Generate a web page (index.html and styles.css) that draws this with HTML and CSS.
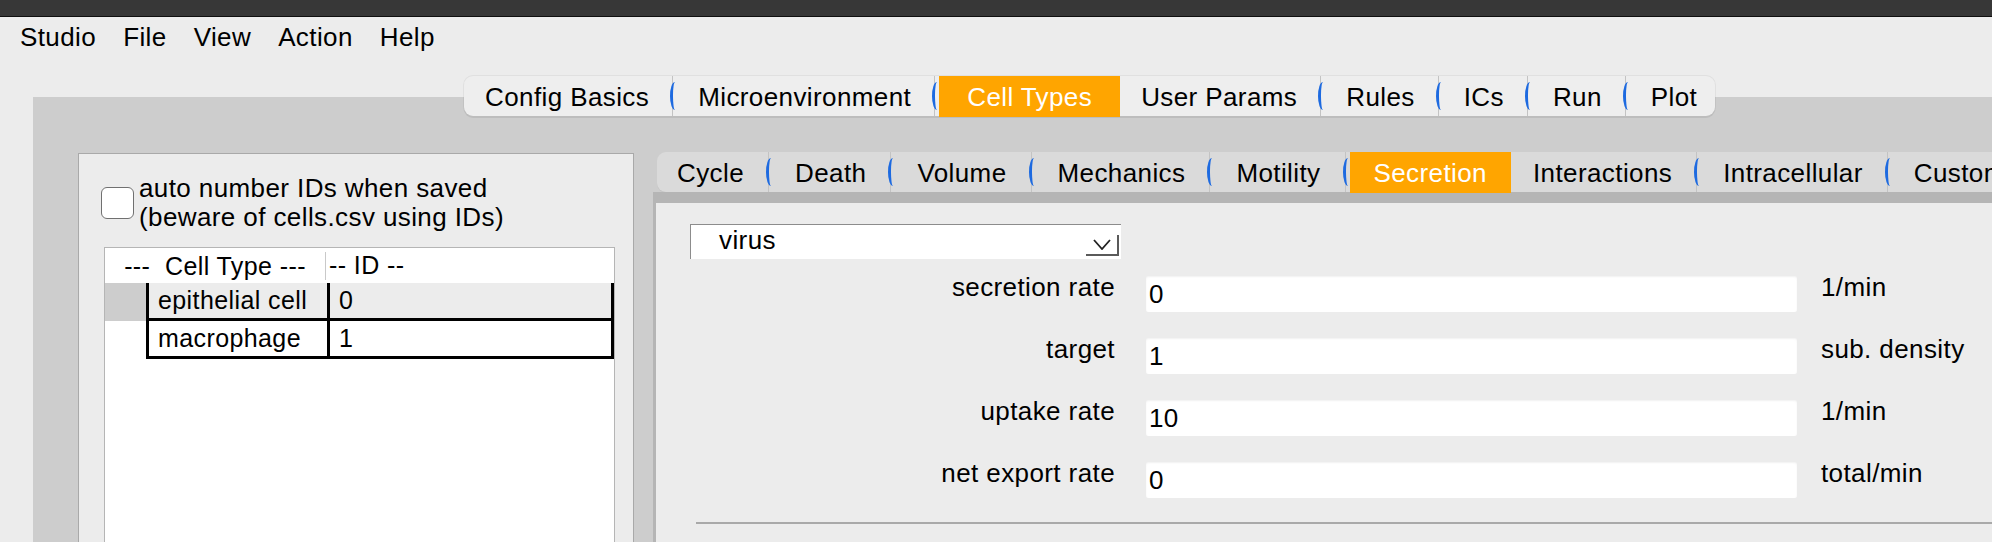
FILE: index.html
```html
<!DOCTYPE html>
<html>
<head>
<meta charset="utf-8">
<title>PhysiCell Studio</title>
<link rel="stylesheet" href="styles.css">
</head>
<body>
<div class="titlebar"></div>
<nav class="menubar">
  <span>Studio</span><span>File</span><span>View</span><span>Action</span><span>Help</span>
</nav>
<main class="panel">
  <div class="tabbar top-tabs">
    <span class="tab first">Config Basics</span>
    <span class="sep"></span>
    <span class="tab">Microenvironment</span>
    <span class="sep"></span>
    <span class="tab active">Cell Types</span>
    <span class="tab">User Params</span>
    <span class="sep"></span>
    <span class="tab">Rules</span>
    <span class="sep"></span>
    <span class="tab">ICs</span>
    <span class="sep"></span>
    <span class="tab">Run</span>
    <span class="sep"></span>
    <span class="tab last">Plot</span>
  </div>
  <div class="body-row">
    <section class="left-panel">
      <div class="auto-id">
        <span class="checkbox"></span>
        <span class="auto-text">auto number IDs when saved<br>(beware of cells.csv using IDs)</span>
      </div>
      <div class="table">
        <div class="thead">
          <div class="th th-type">---&nbsp; Cell Type ---</div>
          <div class="th th-id">-- ID --</div>
        </div>
        <div class="tr current">
          <div class="rowhead"></div>
          <div class="td name">epithelial cell</div>
          <div class="td id">0</div>
        </div>
        <div class="tr">
          <div class="rowhead"></div>
          <div class="td name">macrophage</div>
          <div class="td id">1</div>
        </div>
      </div>
    </section>
    <section class="right-panel">
      <div class="tabbar sub-tabs">
        <span class="tab first">Cycle</span>
        <span class="sep"></span>
        <span class="tab">Death</span>
        <span class="sep"></span>
        <span class="tab">Volume</span>
        <span class="sep"></span>
        <span class="tab">Mechanics</span>
        <span class="sep"></span>
        <span class="tab">Motility</span>
        <span class="sep"></span>
        <span class="tab active">Secretion</span>
        <span class="tab">Interactions</span>
        <span class="sep"></span>
        <span class="tab">Intracellular</span>
        <span class="sep"></span>
        <span class="tab">Custom Data</span>
      </div>
      <div class="content">
        <div class="select">
          <span class="select-value">virus</span>
          <span class="select-btn">
            <svg width="18" height="11" viewBox="0 0 18 11"><polyline points="1,1 9,10 17,1" fill="none" stroke="#222" stroke-width="1.8"/></svg>
          </span>
        </div>
        <div class="fields">
          <div class="field">
            <span class="field-label">secretion rate</span>
            <input class="field-input" type="text" value="0">
            <span class="field-unit">1/min</span>
          </div>
          <div class="field">
            <span class="field-label">target</span>
            <input class="field-input" type="text" value="1">
            <span class="field-unit">sub. density</span>
          </div>
          <div class="field">
            <span class="field-label">uptake rate</span>
            <input class="field-input" type="text" value="10">
            <span class="field-unit">1/min</span>
          </div>
          <div class="field">
            <span class="field-label">net export rate</span>
            <input class="field-input" type="text" value="0">
            <span class="field-unit">total/min</span>
          </div>
        </div>
        <hr class="divider">
      </div>
    </section>
  </div>
</main>
</body>
</html>
```

FILE: styles.css
```css
* { box-sizing: border-box; }

html, body { margin: 0; }

body {
  width: 1992px;
  height: 542px;
  overflow: hidden;
  background: #ececec;
  font-family: "Liberation Sans", Arial, Helvetica, sans-serif;
  font-size: 26px;
  letter-spacing: 0.4px;
  color: #000;
}

.titlebar {
  height: 17px;
  background: #373737;
  border-bottom: 1px solid #0f0f0f;
}

.menubar {
  display: flex;
  gap: 27px;
  height: 40px;
  line-height: 40px;
  padding-left: 20px;
}

.panel {
  display: flow-root;
  margin: 40px 0 0 33px;
  height: 460px;
  background: #cdcdcd;
}

/* segmented tab bars */
.tabbar {
  display: flex;
  width: max-content;
  white-space: nowrap;
}

.top-tabs {
  margin: -21px 0 0 431px;
  height: 40px;
  background: #eeeeee;
  border-radius: 9px;
  box-shadow: 0 2px 0 #bdbdbd, 0 0 0 1px rgba(0, 0, 0, 0.05);
}

.tab {
  padding: 3px 21px 0;
  line-height: 37px;
}

.top-tabs .last { padding-right: 18px; }

.tab.active {
  height: 41px;
  background: #ffa500;
  color: #fff;
  padding: 3px 28px 0;
}

.sep {
  flex: 0 0 4px;
  display: flex;
  align-items: center;
  background: linear-gradient(90deg, transparent 2px, #c3c3c3 2px, #c3c3c3 3px, transparent 3px);
}

.sep::before {
  content: "";
  width: 4px;
  height: 28px;
  border-left: 3px solid #1d6ae0;
  border-radius: 5px 0 0 5px / 14px 0 0 14px;
}

.body-row {
  display: flex;
  align-items: flex-start;
  margin-top: 36px;
}

/* left: cell type list */
.left-panel {
  flex: none;
  width: 556px;
  height: 420px;
  margin: 1px 0 0 45px;
  padding-top: 20px;
  background: #ececec;
  border: 1px solid #a9a9a9;
}

.auto-id {
  display: flex;
  align-items: center;
  gap: 5px;
  margin-left: 22px;
}

.checkbox {
  flex: none;
  width: 33px;
  height: 32px;
  background: #fff;
  border: 1.5px solid #707070;
  border-radius: 6px;
}

.auto-text { line-height: 29px; }

.table {
  width: 511px;
  height: 400px;
  margin: 15px 0 0 25px;
  background: #fff;
  border: 1px solid #b5b5b5;
  border-bottom: none;
  font-size: 25px;
}

.thead {
  display: flex;
  align-items: center;
  height: 35px;
}

.th-type {
  width: 221px;
  text-align: center;
  line-height: 28px;
  border-right: 1px solid #c9c9c9;
}

.th-id { padding-left: 3px; }

.tr {
  display: flex;
  height: 38px;
}

.rowhead { width: 41px; }
.tr.current .rowhead { background: #cdcdcd; }

.td {
  line-height: 35px;
  padding-left: 9px;
  border-left: 3px solid #000;
  border-bottom: 3px solid #000;
}

.td.name { width: 181px; }

.td.id {
  flex: 1;
  border-right: 3px solid #000;
}

.tr.current .td { background: #ececec; }

/* right: secretion editor */
.right-panel {
  flex: 1;
  min-width: 0;
  margin-left: 19px;
  overflow: hidden;
}

.sub-tabs {
  margin-left: 4px;
  height: 40px;
  background: #dadada;
  border-radius: 9px 0 0 9px;
  box-shadow: 0 1px 0 #c4c4c4;
}

.sub-tabs .tab { padding: 3px 22px 0; }
.sub-tabs .first { padding-left: 20px; }
.sub-tabs .tab.active { padding: 3px 24px 0; }

.content {
  height: 400px;
  padding-top: 21px;
  background: #ececec;
  border-top: 11px solid #b5b5b5;
  border-left: 3px solid #b5b5b5;
}

.select {
  display: flex;
  align-items: flex-start;
  width: 431px;
  height: 35px;
  margin-left: 34px;
  background: #fff;
  border-top: 1px solid #8c8c8c;
  border-left: 1px solid #8c8c8c;
}

.select-value {
  flex: 1;
  padding-left: 28px;
  line-height: 30px;
}

.select-btn {
  display: flex;
  align-items: center;
  justify-content: center;
  width: 33px;
  height: 21px;
  margin: 10px 2px 0 0;
  border-right: 2px solid #5a5a5a;
  border-bottom: 2px solid #5a5a5a;
}

.field {
  display: flex;
  height: 40px;
  margin-top: 22px;
}

.field:first-child { margin-top: 13px; }

.field-label {
  flex: none;
  width: 459px;
  text-align: right;
  line-height: 30px;
}

.field-input {
  flex: none;
  width: 651px;
  height: 36px;
  margin: 4px 0 0 31px;
  padding: 0 3px;
  border: none;
  border-radius: 2px;
  outline: none;
  background: #fff;
  box-shadow: inset 0 1px 2px rgba(0, 0, 0, 0.06);
  font: inherit;
  letter-spacing: inherit;
  color: #000;
}

.field-unit {
  margin-left: 24px;
  line-height: 30px;
  white-space: nowrap;
}

.divider {
  height: 2px;
  margin: 24px 0 0 40px;
  border: 0;
  background: #a9a9a9;
}
```
